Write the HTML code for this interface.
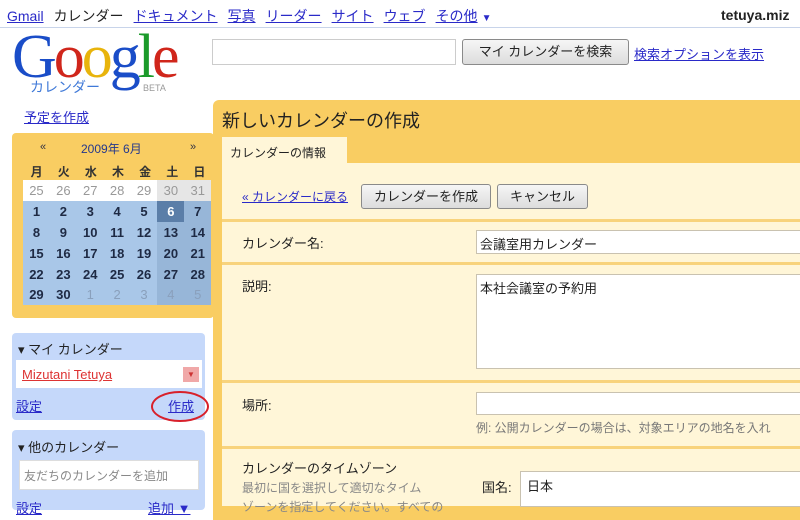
<!DOCTYPE html>
<html><head><meta charset="utf-8"><style>
*{margin:0;padding:0;box-sizing:border-box}
body{width:800px;height:506px;overflow:hidden;background:#fff;position:relative;font-family:"Liberation Sans","Noto Sans CJK JP",sans-serif;font-size:13px;color:#222}
.a{position:absolute;white-space:nowrap}
a,.l{color:#2a2ac8;text-decoration:underline}
.nav span{margin-right:10px}
.cal td{width:26.9px;height:20.9px;text-align:center;font-weight:bold;font-size:13px;color:#1e2a44}
.cal{border-collapse:collapse;position:absolute;left:23px;top:180px}
.hr{position:absolute;left:222px;width:578px;height:3px;background:#f8d37c}
.inp{position:absolute;background:#fff;border:1px solid #c9c2b0}
.btn{position:absolute;border:1px solid #8a8a8a;border-radius:3px;background:linear-gradient(#f6f6f6,#dcdcdc);font-size:13px;text-align:center;color:#222}
</style></head><body>
<div class="a nav" style="left:7px;top:6px;font-size:14px"><span class="l">Gmail</span><span>カレンダー</span><span class="l">ドキュメント</span><span class="l">写真</span><span class="l">リーダー</span><span class="l">サイト</span><span class="l">ウェブ</span><span class="l">その他</span><span style="color:#2a2ac8;font-size:10px;margin-left:-6px">▼</span></div>
<div class="a" style="left:721px;top:7px;font-weight:bold;font-size:14px">tetuya.miz</div>
<div class="a" style="left:0;top:27px;width:800px;height:1px;background:#c8d4ea"></div>
<div class="a" style="left:12px;top:24px;font-family:'Liberation Serif',serif;font-size:62px;letter-spacing:-3px;line-height:66px"><span style="color:#1a4dc8">G</span><span style="color:#d0261b">o</span><span style="color:#e8b40c">o</span><span style="color:#1a4dc8">g</span><span style="color:#1b9a2a">l</span><span style="color:#d0261b">e</span></div>
<div class="a" style="left:30px;top:77px;color:#3f79d8;font-size:14px">カレンダー</div>
<div class="a" style="left:143px;top:83px;color:#999;font-size:9px">BETA</div>
<div class="inp" style="left:212px;top:39px;width:244px;height:26px;border-color:#ccc"></div>
<div class="btn" style="left:462px;top:39px;width:167px;height:26px;line-height:24px">マイ カレンダーを検索</div>
<div class="a l" style="left:634px;top:44px;font-size:13px">検索オプションを表示</div>
<div class="a l" style="left:24px;top:107px;font-size:13px">予定を作成</div>
<div class="a" style="left:12px;top:133px;width:202px;height:185px;background:#f9cd62;border-radius:4px"></div>
<div class="a" style="left:40px;top:141px;font-size:11px;color:#334">«</div>
<div class="a" style="left:81px;top:140px;font-size:12px;color:#24388c">2009年 6月</div>
<div class="a" style="left:190px;top:141px;font-size:11px;color:#334">»</div>
<div class="a" style="left:23px;top:163px;width:190px;display:flex;font-size:12px;font-weight:bold;color:#333"><span style="flex:1;text-align:center">月</span><span style="flex:1;text-align:center">火</span><span style="flex:1;text-align:center">水</span><span style="flex:1;text-align:center">木</span><span style="flex:1;text-align:center">金</span><span style="flex:1;text-align:center">土</span><span style="flex:1;text-align:center">日</span></div>
<table class="cal">
<tr style="background:#fff"><td style="color:#999;font-weight:normal">25</td><td style="color:#999;font-weight:normal">26</td><td style="color:#999;font-weight:normal">27</td><td style="color:#999;font-weight:normal">28</td><td style="color:#999;font-weight:normal">29</td><td style="color:#999;font-weight:normal;background:#e6e6e6">30</td><td style="color:#999;font-weight:normal;background:#e6e6e6">31</td></tr>
<tr style="background:#a9c7e8"><td>1</td><td>2</td><td>3</td><td>4</td><td>5</td><td style="background:#5b7ea8;color:#fff">6</td><td style="background:#97b6d8">7</td></tr>
<tr style="background:#a9c7e8"><td>8</td><td>9</td><td>10</td><td>11</td><td>12</td><td style="background:#97b6d8">13</td><td style="background:#97b6d8">14</td></tr>
<tr style="background:#a9c7e8"><td>15</td><td>16</td><td>17</td><td>18</td><td>19</td><td style="background:#97b6d8">20</td><td style="background:#97b6d8">21</td></tr>
<tr style="background:#a9c7e8"><td>22</td><td>23</td><td>24</td><td>25</td><td>26</td><td style="background:#97b6d8">27</td><td style="background:#97b6d8">28</td></tr>
<tr style="background:#a9c7e8"><td>29</td><td>30</td><td style="color:#8aa0bc;font-weight:normal">1</td><td style="color:#8aa0bc;font-weight:normal">2</td><td style="color:#8aa0bc;font-weight:normal">3</td><td style="color:#8aa0bc;font-weight:normal;background:#97b6d8">4</td><td style="color:#8aa0bc;font-weight:normal;background:#97b6d8">5</td></tr>
</table>
<div class="a" style="left:12px;top:333px;width:193px;height:87px;background:#c5d8fa;border-radius:4px"></div>
<div class="a" style="left:18px;top:339px;font-size:13px">▾ マイ カレンダー</div>
<div class="a" style="left:16px;top:360px;width:186px;height:28px;background:#fff"></div>
<div class="a" style="left:22px;top:367px;color:#d33;text-decoration:underline;font-size:13px">Mizutani Tetuya</div>
<div class="a" style="left:183px;top:367px;width:16px;height:15px;background:#f0a8a8;color:#c33;font-size:8px;text-align:center;line-height:15px">▼</div>
<div class="a l" style="left:16px;top:396px">設定</div>
<div class="a l" style="left:168px;top:396px">作成</div>
<div class="a" style="left:151px;top:391px;width:58px;height:31px;border:2px solid #d8202a;border-radius:50%"></div>
<div class="a" style="left:12px;top:430px;width:193px;height:80px;background:#c5d8fa;border-radius:4px"></div>
<div class="a" style="left:18px;top:437px;font-size:13px">▾ 他のカレンダー</div>
<div class="inp" style="left:19px;top:460px;width:180px;height:30px;border-color:#ddd"></div>
<div class="a" style="left:24px;top:467px;color:#888;font-size:12px">友だちのカレンダーを追加</div>
<div class="a l" style="left:16px;top:498px">設定</div>
<div class="a l" style="left:148px;top:498px">追加 ▼</div>
<div class="a" style="left:213px;top:100px;width:600px;height:420px;background:#f9cd62;border-radius:6px 0 0 0"></div>
<div class="a" style="left:222px;top:107px;font-size:18px;color:#222">新しいカレンダーの作成</div>
<div class="a" style="left:222px;top:163px;width:578px;height:343px;background:#fff6d8"></div>
<div class="a" style="left:222px;top:137px;width:125px;height:27px;background:#fff6d8;font-size:12px;padding:7px 0 0 8px">カレンダーの情報</div>
<div class="a l" style="left:242px;top:188px;font-size:12px">« カレンダーに戻る</div>
<div class="btn" style="left:361px;top:184px;width:130px;height:25px;line-height:23px">カレンダーを作成</div>
<div class="btn" style="left:497px;top:184px;width:91px;height:25px;line-height:23px">キャンセル</div>
<div class="hr" style="top:219px"></div>
<div class="a" style="left:242px;top:233px;font-size:13px">カレンダー名:</div>
<div class="inp" style="left:476px;top:230px;width:330px;height:24px"></div>
<div class="a" style="left:480px;top:234px;font-size:13px">会議室用カレンダー</div>
<div class="hr" style="top:262px"></div>
<div class="a" style="left:242px;top:276px;font-size:13px">説明:</div>
<div class="inp" style="left:476px;top:274px;width:330px;height:95px"></div>
<div class="a" style="left:480px;top:278px;font-size:13px">本社会議室の予約用</div>
<div class="hr" style="top:380px"></div>
<div class="a" style="left:242px;top:395px;font-size:13px">場所:</div>
<div class="inp" style="left:476px;top:392px;width:330px;height:23px"></div>
<div class="a" style="left:476px;top:419px;font-size:12px;color:#777">例: 公開カレンダーの場合は、対象エリアの地名を入れ</div>
<div class="hr" style="top:446px"></div>
<div class="a" style="left:242px;top:458px;font-size:13px">カレンダーのタイムゾーン</div>
<div class="a" style="left:242px;top:479px;font-size:12px;color:#888;line-height:19px">最初に国を選択して適切なタイム<br>ゾーンを指定してください。すべての</div>
<div class="a" style="left:482px;top:477px;font-size:13px">国名:</div>
<div class="inp" style="left:520px;top:471px;width:290px;height:36px"></div>
<div class="a" style="left:527px;top:476px;font-size:13px">日本</div>
</body></html>
